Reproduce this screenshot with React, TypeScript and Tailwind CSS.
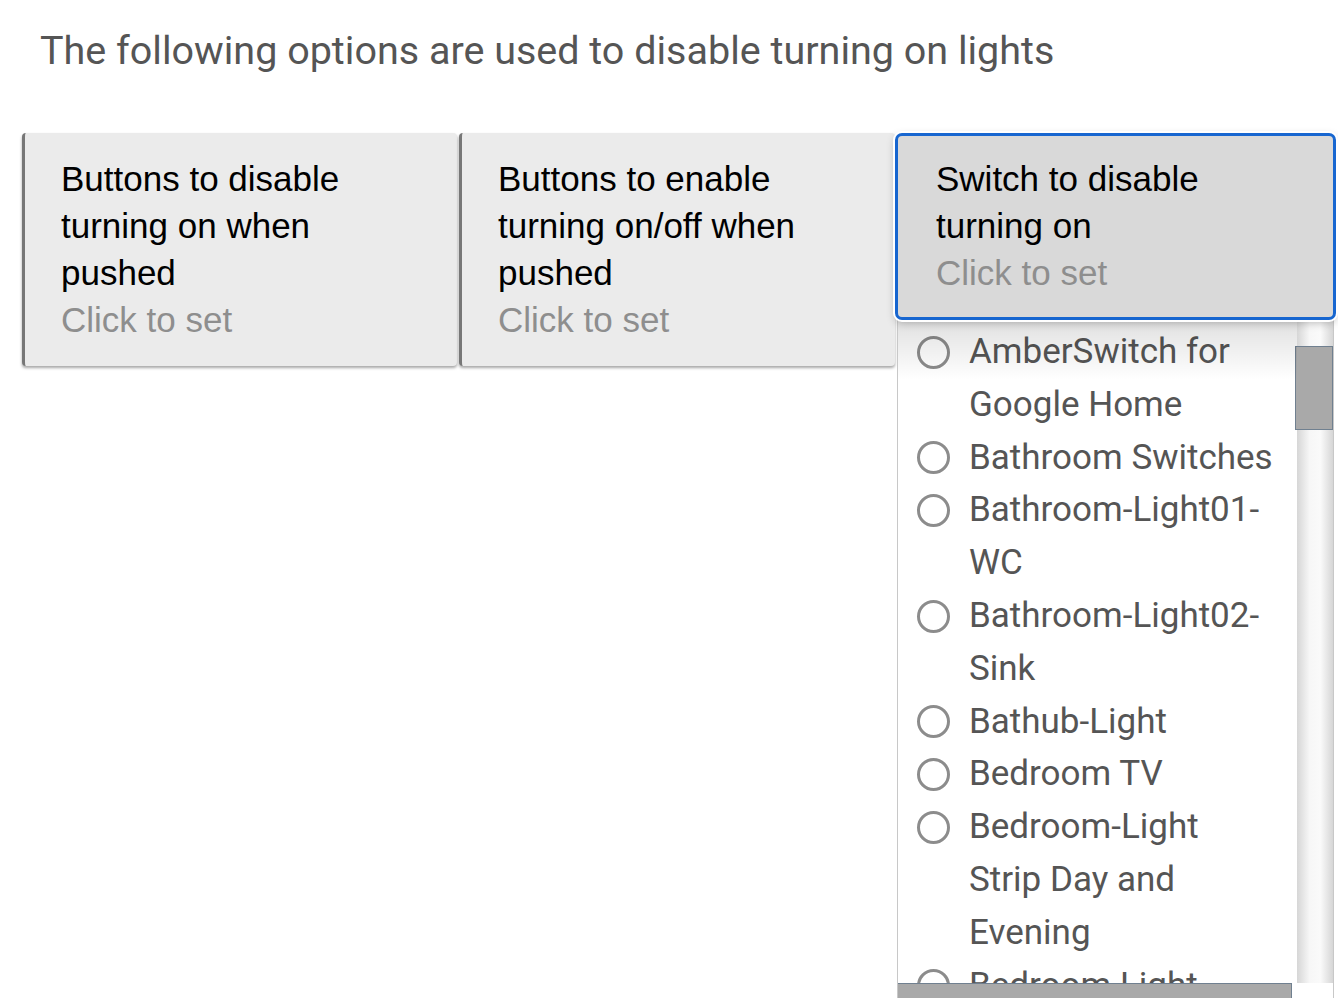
import React from "react";

const items = [
  "AmberSwitch for Google Home",
  "Bathroom Switches",
  "Bathroom-Light01-WC",
  "Bathroom-Light02-Sink",
  "Bathub-Light",
  "Bedroom TV",
  "Bedroom-Light Strip Day and Evening",
  "Bedroom Light",
];

function Card({ title, width, ml }: { title: string; width: string; ml: string }) {
  return (
    <div
      className={`${width} ${ml} self-start bg-[#ebebeb] border-l-[3px] border-[#777] rounded-[4px] shadow-[0_2px_3px_rgba(0,0,0,0.35)] pt-[22px] pb-[23px] pl-[36px] pr-[50px] text-[35px] leading-[47px] text-black`}
      style={{ fontFamily: '"Liberation Sans", Arial, sans-serif' }}
    >
      <div>{title}</div>
      <div className="text-[#8e8e8e]">Click to set</div>
    </div>
  );
}

export default function App() {
  return (
    <div className="w-[1338px] h-[998px] bg-white overflow-hidden">
      <p
        className="pl-[40px] pt-[28px] text-[39.5px] leading-[46px] text-[#555]"
        style={{ fontFamily: "Roboto, sans-serif" }}
      >
        The following options are used to disable turning on lights
      </p>
      <div className="flex pl-[22px] mt-[59px]">
        <Card title="Buttons to disable turning on when pushed" width="w-[435px]" ml="ml-0" />
        <Card title="Buttons to enable turning on/off when pushed" width="w-[436px]" ml="ml-[2px]" />
        <div className="w-[441px] flex flex-col">
          <div
            className="bg-[#d9d9d9] border-[3px] border-[#1766d0] rounded-[7px] shadow-[0_0_0_2px_#ffffff,0_3px_8px_rgba(0,0,0,0.25)] pt-[19px] pb-[21px] pl-[38px] pr-[50px] text-[35px] leading-[47px] text-black relative z-10"
            style={{ fontFamily: '"Liberation Sans", Arial, sans-serif' }}
          >
            <div>Switch to disable turning on</div>
            <div className="text-[#8e8e8e]">Click to set</div>
          </div>
          <div className="relative ml-[2px] w-[437px] h-[678px] border-l border-r border-[#c8c8c8] bg-white flex flex-col">
            <div className="flex flex-1 min-h-0">
              <div
                className="flex-1 overflow-hidden pt-[6px] pl-[19px] text-[35px] leading-[52.8px] text-[#555]"
                style={{ fontFamily: "Roboto, sans-serif" }}
              >
                {items.map((t) => (
                  <div key={t} className="flex items-start">
                    <div className="shrink-0 h-[52.8px] flex items-center">
                      <div className="w-[33px] h-[33px] rounded-full border-[3px] border-[#8c8c8c]" />
                    </div>
                    <div className="ml-[19px] w-[306px]">{t}</div>
                  </div>
                ))}
              </div>
              <div className="relative w-[36px] bg-[linear-gradient(to_right,#d6d6d6,#f7f7f7_35%,#fafafa_65%,#d6d6d6)]">
                <div className="absolute left-[-2px] right-0 top-[26px] h-[84px] bg-[#a9a9a9] border border-[#708090]" />
              </div>
            </div>
            <div className="h-[15px] flex">
              <div className="w-[394px] bg-[#a9a9a9] border-t border-r border-[#708090]" />
              <div className="flex-1 bg-white" />
            </div>
            <div className="pointer-events-none absolute left-0 right-[36px] top-0 h-[60px] bg-[linear-gradient(to_bottom,rgba(0,0,0,0.12),rgba(0,0,0,0))]" />
          </div>
        </div>
      </div>
    </div>
  );
}
